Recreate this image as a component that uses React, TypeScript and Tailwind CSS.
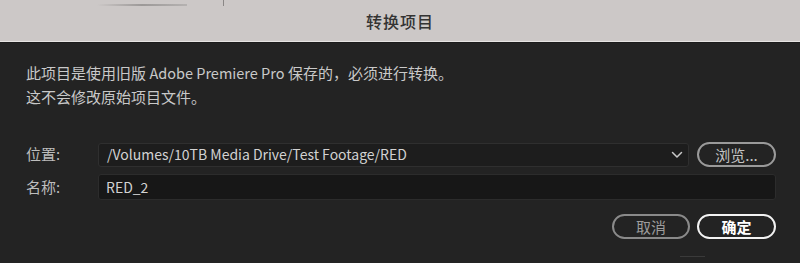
import React from "react";

const font = { fontFamily: '"Noto Sans CJK SC", "Noto Sans", sans-serif' };

const Chevron = () => (
    <svg width="12" height="8" viewBox="0 0 12 8" fill="none">
        <path d="M1.5 1.5 L6 6 L10.5 1.5" stroke="#c8c8c8" strokeWidth="1.5" strokeLinecap="round" strokeLinejoin="round" />
    </svg>
);

const App = () => {
    return (
        <div
            className="w-[800px] h-[263px] bg-[#232323] flex flex-col overflow-hidden text-[15px]"
            style={font}
        >
            {/* title bar */}
            <div className="relative h-[42px] bg-[#ccc8c7] border-b border-[#e6e3e2] flex items-center justify-center">
                <div className="absolute left-[97px] top-[4px] w-[90px] h-[2px] bg-gradient-to-r from-transparent via-[#9c9998] to-[#b5b2b1]" />
                <div className="absolute left-[223px] top-0 w-px h-[6px] bg-[#8a8786]" />
                <span className="text-[16px] font-medium text-[#333333] tracking-[1px]">转换项目</span>
            </div>
            <div className="h-px bg-[#1b1b1b]" />

            <div className="flex flex-col pl-[26px] pr-[24px]">
                <div className="pt-[18px] leading-[24px] text-[#c9c9c9]">
                    <p>
                        此项目是使用旧版 <span className="text-[14.5px]">Adobe Premiere Pro</span> 保存的，必须进行转换。
                    </p>
                    <p>这不会修改原始项目文件。</p>
                </div>

                <div className="mt-[33px] flex items-center h-[25px]">
                    <span className="w-[72px] text-[#bdbdbd]">位置:</span>
                    <div className="flex-1 h-[24px] flex items-center justify-between rounded-[3px] border border-[#2f2f2f] bg-[#1d1d1d] pl-[8px] pr-[5px]">
                        <span className="text-[14px] text-[#d2d2d2]">/Volumes/10TB Media Drive/Test Footage/RED</span>
                        <Chevron />
                    </div>
                    <button className="ml-[8px] w-[79px] h-[25px] rounded-full border-2 border-[#9a9a9a] text-[#c4c4c4] leading-none flex items-center justify-center">
                        浏览...
                    </button>
                </div>

                <div className="mt-[7px] flex items-center h-[26px]">
                    <span className="w-[72px] text-[#bdbdbd]">名称:</span>
                    <div className="flex-1 h-[26px] flex items-center rounded-[3px] border border-[#2c2c2c] bg-[#171717] pl-[7px]">
                        <span className="text-[14px] text-[#d2d2d2]">RED_2</span>
                    </div>
                </div>

                <div className="mt-[14px] flex justify-end gap-[7px]">
                    <button className="w-[78px] h-[25px] rounded-full border-2 border-[#8a8a8a] text-[#9c9c9c] leading-none flex items-center justify-center">
                        取消
                    </button>
                    <button className="w-[79px] h-[25px] rounded-full border-2 border-[#f2f2f2] text-white font-bold leading-none flex items-center justify-center">
                        确定
                    </button>
                </div>
                <div className="mt-[17px] ml-[654px] w-[25px] h-px bg-[#3a3a3a]" />
            </div>
        </div>
    );
};

export default App;
